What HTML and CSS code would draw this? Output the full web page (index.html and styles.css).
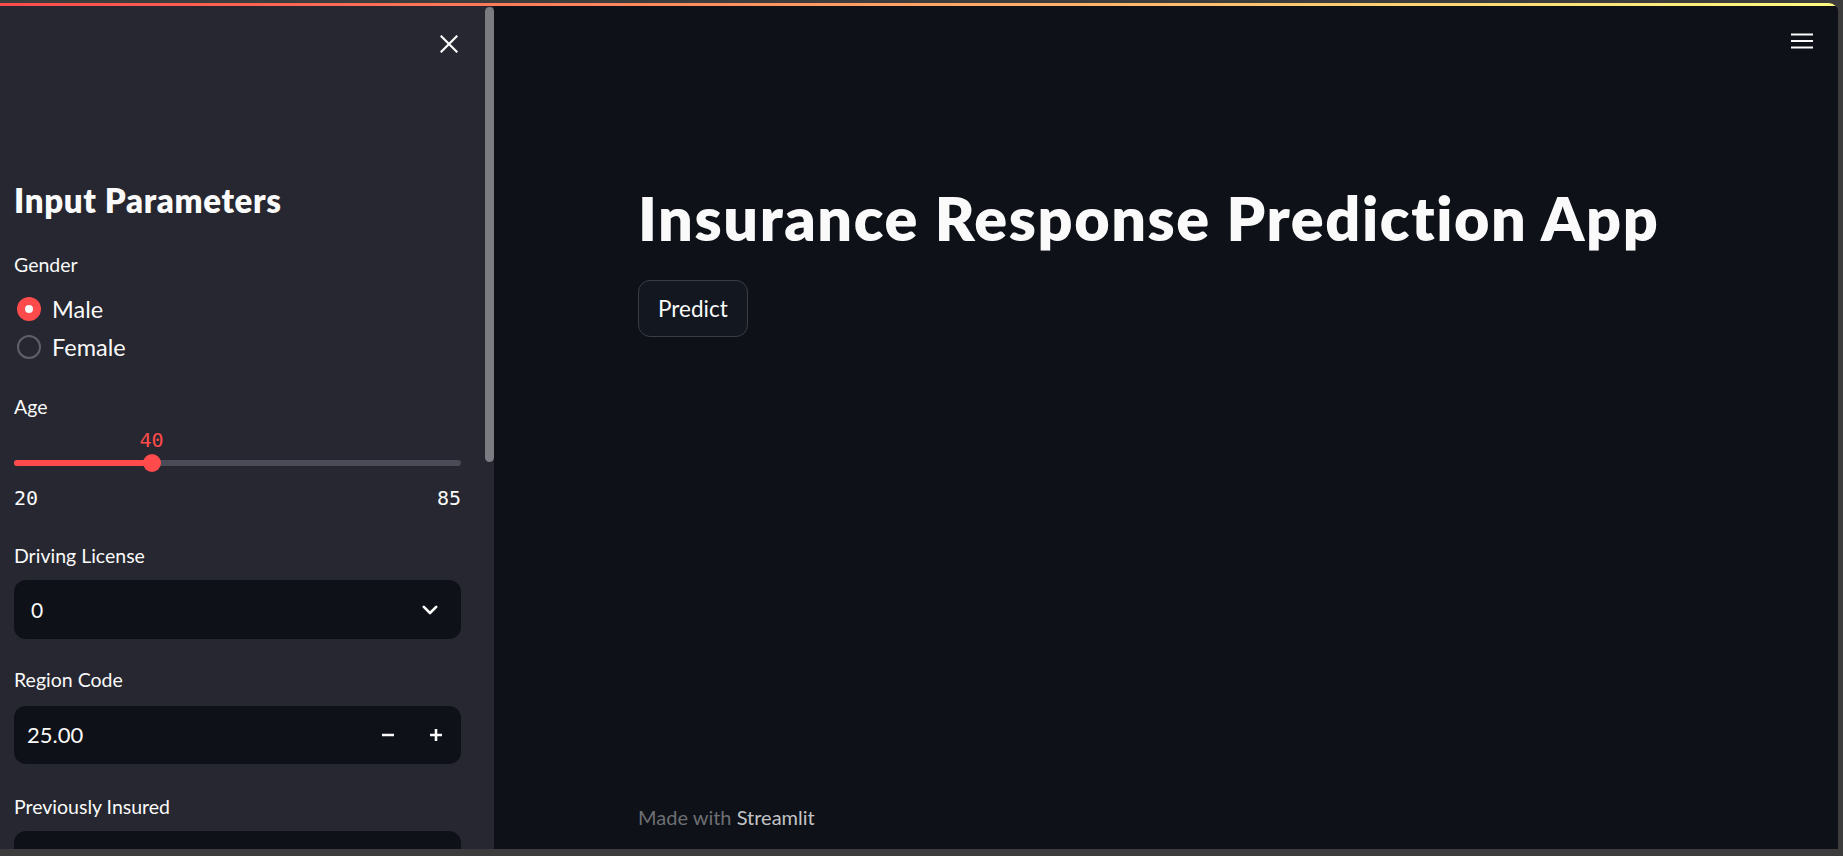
FILE: index.html
```html
<!DOCTYPE html>
<html lang="en">
<head>
<meta charset="utf-8">
<title>Insurance Response Prediction App</title>
<link rel="stylesheet" href="styles.css">
</head>
<body>
<div class="frame">
  <div class="window">
    <div class="decoration"></div>
    <div class="app">
      <aside class="sidebar">
        <div class="sidebar-content">
          <div class="sidebar-header">
            <button class="icon-btn close-btn" aria-label="Close sidebar">
              <svg width="18" height="18" viewBox="0 0 18 18"><path d="M1.5 1.5 L16.5 16.5 M16.5 1.5 L1.5 16.5" stroke="#fafafa" stroke-width="2.2" stroke-linecap="square" fill="none"/></svg>
            </button>
          </div>
          <h2 class="sidebar-title">Input Parameters</h2>

          <div class="widget widget-radio">
            <div class="widget-label label-radio">Gender</div>
            <div class="radio-group">
              <div class="radio-option is-checked"><span class="radio-dot"></span><span class="radio-text">Male</span></div>
              <div class="radio-option"><span class="radio-dot"></span><span class="radio-text">Female</span></div>
            </div>
          </div>

          <div class="widget widget-slider">
            <div class="widget-label label-slider">Age</div>
            <div class="slider">
              <div class="slider-value-row"><span class="slider-value" style="left:30.77%">40</span></div>
              <div class="slider-track-wrap">
                <div class="slider-track"><div class="slider-fill" style="width:30.77%"></div></div>
                <div class="slider-thumb" style="left:30.77%"></div>
              </div>
              <div class="slider-range"><span>20</span><span>85</span></div>
            </div>
          </div>

          <div class="widget widget-select">
            <div class="widget-label label-select">Driving License</div>
            <div class="select-box">
              <span class="select-value">0</span>
              <svg class="chevron" width="16" height="10" viewBox="0 0 16 10"><path d="M1.8 1.8 L8 8 L14.2 1.8" stroke="#fafafa" stroke-width="2.6" stroke-linecap="round" stroke-linejoin="round" fill="none"/></svg>
            </div>
          </div>

          <div class="widget widget-number">
            <div class="widget-label label-number">Region Code</div>
            <div class="number-box">
              <span class="number-value">25.00</span>
              <div class="step-buttons">
                <button class="step-btn" aria-label="Decrement"><svg width="12" height="12" viewBox="0 0 12 12"><path d="M0 6 H12" stroke="#fafafa" stroke-width="2.6" fill="none"/></svg></button>
                <button class="step-btn" aria-label="Increment"><svg width="12" height="12" viewBox="0 0 12 12"><path d="M0 6 H12 M6 0 V12" stroke="#fafafa" stroke-width="2.6" fill="none"/></svg></button>
              </div>
            </div>
          </div>

          <div class="widget widget-select2">
            <div class="widget-label label-select">Previously Insured</div>
            <div class="select-box" aria-label="Previously Insured select">
              <span class="select-value"></span>
              <svg class="chevron" width="16" height="10" viewBox="0 0 16 10"><path d="M1.8 1.8 L8 8 L14.2 1.8" stroke="#fafafa" stroke-width="2.6" stroke-linecap="round" stroke-linejoin="round" fill="none"/></svg>
            </div>
          </div>
        </div>
        <div class="scrollbar"><div class="scrollbar-thumb"></div></div>
      </aside>

      <main class="main">
        <div class="main-header">
          <button class="icon-btn menu-btn" aria-label="Main menu">
            <svg width="22" height="16" viewBox="0 0 22 16"><path d="M0 1.5 H22 M0 8 H22 M0 14.5 H22" stroke="#fafafa" stroke-width="2" fill="none"/></svg>
          </button>
        </div>
        <div class="block">
          <h1 class="title">Insurance Response Prediction App</h1>
          <button class="btn">Predict</button>
        </div>
        <footer class="footer">
          <div class="footer-inner">Made with <span class="footer-link">Streamlit</span></div>
        </footer>
      </main>
    </div>
  </div>
</div>
</body>
</html>
```

FILE: styles.css
```css
* {
  box-sizing: border-box;
}

html,
body {
  margin: 0;
  padding: 0;
  width: 100%;
  height: 100%;
  overflow: hidden;
}

body {
  background: #3c3c3c;
  font-family: Lato, "Noto Sans", sans-serif;
  color: #fafafa;
}

button {
  font-family: inherit;
  color: inherit;
}

.frame {
  width: 1843px;
  height: 856px;
  padding: 3px 5px 7px 0;
  background: #3c3c3c;
}

.window {
  width: 1838px;
  height: 846px;
  display: flex;
  flex-direction: column;
  border-top-right-radius: 9px;
  overflow: hidden;
  background: #0e1117;
}

.decoration {
  height: 3px;
  flex: none;
  background: linear-gradient(90deg, #ff4b4b, #fffd80);
}

.app {
  flex: 1;
  display: flex;
  min-height: 0;
}

/* ---------- Sidebar ---------- */
.sidebar {
  width: 494px;
  flex: none;
  display: flex;
  background: #262730;
  overflow: hidden;
}

.sidebar-content {
  flex: 1;
  display: flex;
  flex-direction: column;
  padding: 0 24px 0 14px;
  min-width: 0;
}

.scrollbar {
  width: 9px;
  flex: none;
  padding-top: 1px;
}

.scrollbar-thumb {
  height: 455px;
  border-radius: 4.5px;
  background: #7b7b82;
}

.sidebar-header {
  height: 76px;
  flex: none;
  display: flex;
  align-items: center;
  justify-content: flex-end;
}

.icon-btn {
  background: none;
  border: none;
  padding: 0;
  display: flex;
  align-items: center;
  justify-content: center;
  cursor: pointer;
}

.close-btn {
  width: 24px;
  height: 24px;
}

.sidebar-title {
  margin: 98px 0 0;
  font-size: 33px;
  line-height: 40px;
  font-weight: 800;
  letter-spacing: 0.65px;
  white-space: nowrap;
}

.widget-label {
  font-size: 19.5px;
  line-height: 24px;
  padding-top: 1px;
  color: #fafafa;
  white-space: nowrap;
}

.widget-radio {
  margin-top: 32px;
}

.label-radio {
  margin-bottom: 16px;
}

.radio-group {
  display: flex;
  flex-direction: column;
  gap: 6px;
}

.radio-option {
  height: 32px;
  display: flex;
  align-items: center;
  gap: 11px;
  padding-left: 3px;
}

.radio-dot {
  width: 24px;
  height: 24px;
  flex: none;
  border-radius: 50%;
  border: 2px solid #5f6067;
  display: flex;
  align-items: center;
  justify-content: center;
}

.radio-option.is-checked .radio-dot {
  border: none;
  background: #ff4b4b;
}

.radio-option.is-checked .radio-dot::after {
  content: "";
  width: 8px;
  height: 8px;
  border-radius: 50%;
  background: #fafafa;
}

.radio-text {
  font-size: 23.5px;
  line-height: 32px;
}

/* Slider */
.widget-slider {
  margin-top: 31px;
}

.label-slider {
  margin-bottom: 11px;
}

.slider {
  display: flex;
  flex-direction: column;
}

.slider-value-row {
  position: relative;
  height: 20px;
}

.slider-value {
  position: absolute;
  top: 0;
  transform: translateX(-50%);
  font-family: "DejaVu Sans Mono", "Liberation Mono", monospace;
  font-size: 20px;
  line-height: 20px;
  color: #ff4b4b;
}

.slider-track-wrap {
  position: relative;
  height: 18px;
  margin-top: 4px;
  display: flex;
  align-items: center;
}

.slider-track {
  width: 100%;
  height: 6px;
  border-radius: 3px;
  background: #4a4b56;
  overflow: hidden;
}

.slider-fill {
  height: 100%;
  background: #ff4b4b;
}

.slider-thumb {
  position: absolute;
  top: 0;
  width: 18px;
  height: 18px;
  margin-left: -9px;
  border-radius: 50%;
  background: #ff4b4b;
}

.slider-range {
  margin-top: 16px;
  display: flex;
  justify-content: space-between;
  font-family: "DejaVu Sans Mono", "Liberation Mono", monospace;
  font-size: 20px;
  line-height: 20px;
  color: #fafafa;
}

/* Select */
.widget-select {
  margin-top: 35px;
}

.widget-select2 {
  margin-top: 30px;
}

.label-select {
  margin-bottom: 12px;
}

.select-box {
  height: 59px;
  flex: none;
  border-radius: 12px;
  background: #0e1117;
  display: flex;
  align-items: center;
  justify-content: space-between;
  padding: 0 23px 0 17px;
}

.select-value {
  font-size: 21px;
  line-height: 30px;
}

.chevron {
  flex: none;
}

/* Number input */
.widget-number {
  margin-top: 28px;
}

.label-number {
  margin-bottom: 14px;
}

.number-box {
  height: 58px;
  border-radius: 12px;
  background: #0e1117;
  display: flex;
  align-items: center;
  justify-content: space-between;
  padding: 0 1px 0 13px;
  overflow: hidden;
}

.number-value {
  font-size: 22px;
  line-height: 30px;
}

.step-buttons {
  display: flex;
  height: 100%;
}

.step-btn {
  width: 48px;
  height: 100%;
  background: none;
  border: none;
  padding: 0;
  display: flex;
  align-items: center;
  justify-content: center;
}

/* ---------- Main ---------- */
.main {
  flex: 1;
  display: flex;
  flex-direction: column;
  min-width: 0;
  background: #0e1117;
}

.main-header {
  height: 70px;
  flex: none;
  display: flex;
  align-items: center;
  justify-content: flex-end;
  padding-right: 25px;
}

.menu-btn {
  width: 22px;
  height: 16px;
}

.block {
  width: 1104px;
  margin: 0 auto;
  padding: 0 24px;
}

.title {
  margin: 105px 0 0;
  font-size: 61px;
  line-height: 73px;
  font-weight: 800;
  letter-spacing: 1.6px;
  white-space: nowrap;
  color: #fafafa;
}

.btn {
  margin-top: 26px;
  height: 57px;
  padding: 0 19px;
  border: 1px solid #3b3d44;
  border-radius: 12px;
  background: #131720;
  font-size: 22.5px;
  line-height: 30px;
  color: #fafafa;
}

.footer {
  margin-top: auto;
  padding-bottom: 20px;
}

.footer-inner {
  width: 1104px;
  margin: 0 auto;
  padding: 0 24px;
  font-size: 20px;
  line-height: 24px;
  color: #6d6f74;
}

.footer-link {
  color: #c3c4c7;
}
```
